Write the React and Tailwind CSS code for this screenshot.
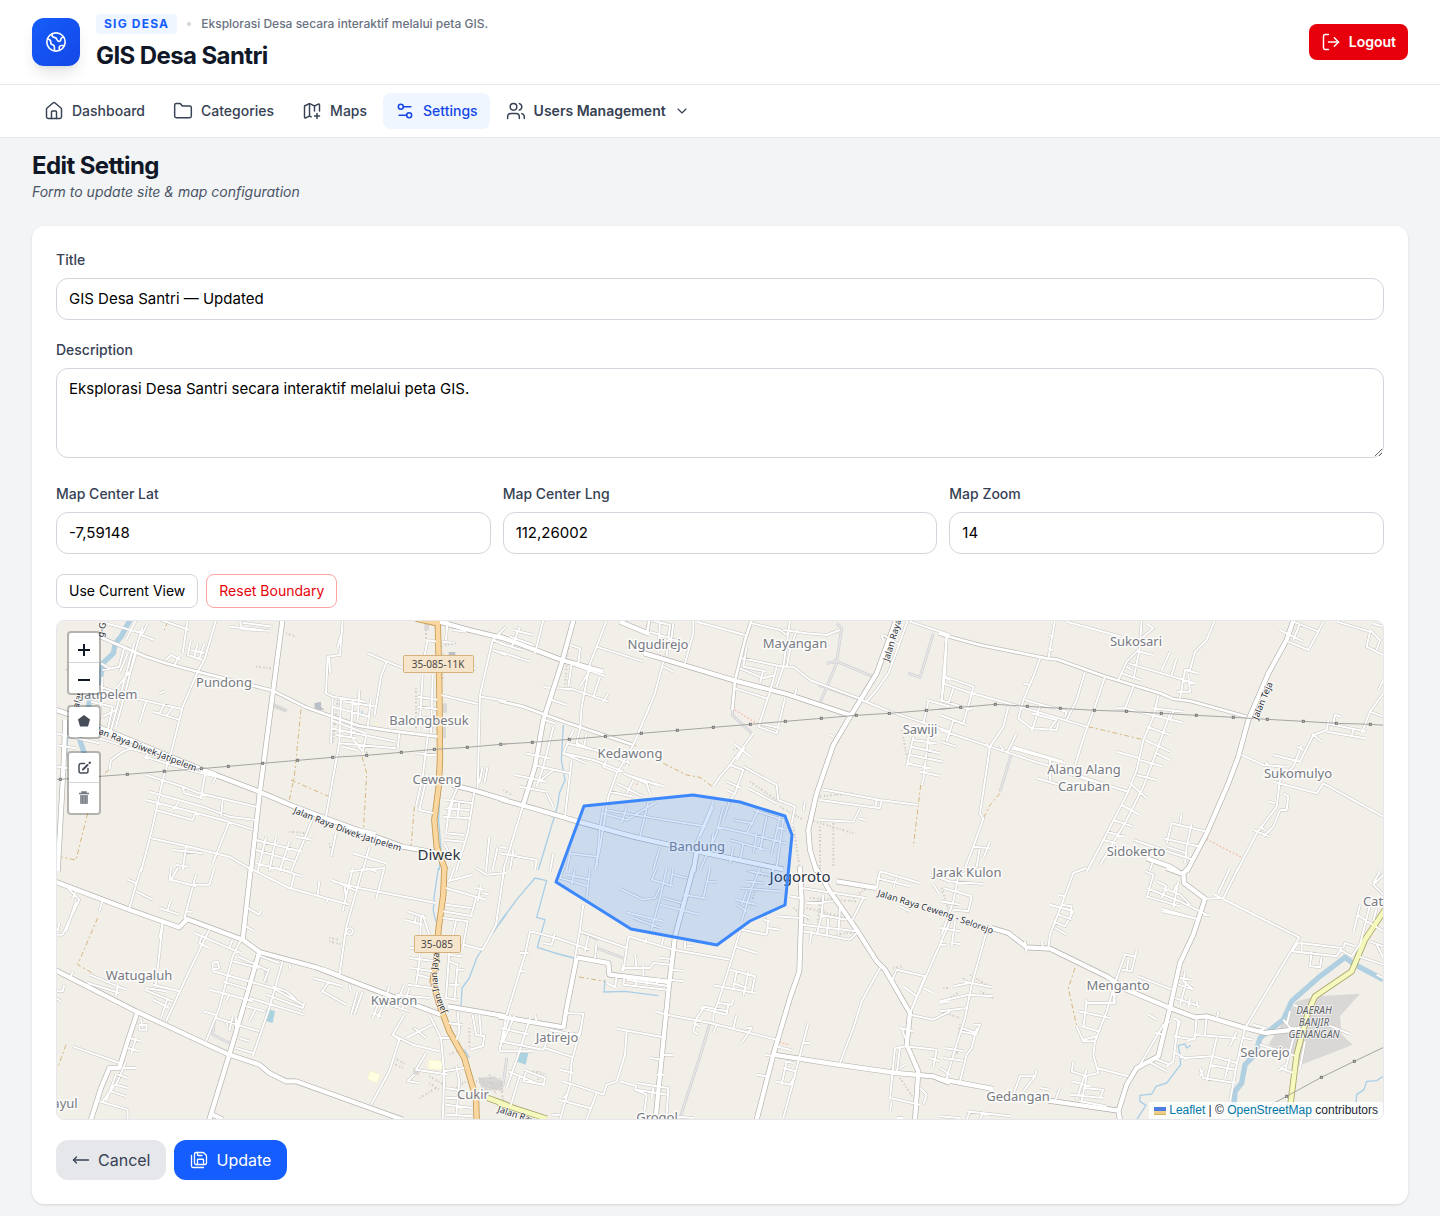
import React from "react";
import {
  House, Folder, MapPlus, Settings2, Users, ChevronDown, LogOut, MoveLeft, SaveAll,
} from "lucide-react";

/* Each sheet of the base map is drawn at three units per pixel from its own origin. */
const sheets = [
  {
    id: "north-west",
    at: "translate(56 620) scale(0.33333)",
    river: "M222 0 L195 50 L178 70 L172 100 L140 130 L133 180 L105 215 L98 260 L68 350 L85 400",
    stream: "M35 345 L32 410 M1152 500 L1148 600 L1155 690 L1150 750 M918 272 V290",
    trunk: "M1080 -4 L1145 10 M1145 -5 L1150 200 L1152 420 L1148 500 L1135 600 L1142 680 L1168 752",
    major:
      "M680 -5 L653 200 L612 512 L585 755 M-5 268 L60 290 L130 322 L440 450 L610 515 L720 562 L1040 680 L1140 698 M28 300 L22 450 L5 755 M1150 5 L1240 30 L1355 58 M1190 495 L1260 513 L1355 542",
    mid: "M130 50 L195 78 L270 110 L330 130 L425 155 L650 212 L750 262 L830 290 L910 318 L1000 332 L1145 350",
    minor:
      "M480 0 L445 120 L425 155 L380 260 L350 380 L320 480 L290 620 L255 755 M860 0 L852 105 L815 110 L810 220 L830 230 L930 245 M860 30 L845 80 M820 110 L822 160 M935 100 L992 125 L1045 145 M992 125 L975 170 L955 290 M1350 20 L1310 60 L1272 225 L1265 505 M1155 225 L1265 252 M1275 230 L1350 243 M1310 60 L1350 75 M1310 90 L1350 105 M1160 110 L1240 125 L1260 150 M100 190 L180 215 L250 238 L380 268 M270 245 L250 310 M310 220 L325 215 M325 250 L310 282 M350 262 L330 290 M290 275 L372 300 M195 78 L240 100 L225 150 L185 200 M140 150 L190 140 L205 80 M235 70 L200 200 L165 330 M215 100 L190 160 M260 20 L240 85 L215 190 L180 320 M240 0 L210 60 M255 45 L295 60 M135 130 L160 145 M150 10 L260 40 L275 10 M315 0 L400 30 M395 0 L380 100 M405 60 L395 105 L440 120 M425 70 L415 110 M445 70 L430 115 M405 90 L445 100 M330 120 L345 105 L375 120 M355 135 L370 108 M520 20 L620 30 M550 0 L560 28 L640 32 M560 8 L650 20 M140 170 L130 300 M180 270 L140 290 M105 245 L170 260 L155 330 M0 340 L130 370 M0 375 L60 385 M0 440 L40 445 M130 355 L240 390 L400 430 L480 460 M150 340 L250 372 M160 450 L165 420 L200 395 L240 380 M265 410 L400 450 L480 470 L470 490 M280 400 L265 415 M450 450 L435 530 M270 465 L380 500 L430 520 L600 560 M380 500 L385 520 L440 535 M500 540 L495 590 M280 515 L440 560 L520 590 L600 600 M270 540 L350 560 L500 600 L590 628 M370 545 L350 570 M300 570 L410 600 L420 575 M520 605 L470 730 M285 655 L400 680 L520 710 L580 745 M350 690 L440 700 M390 680 L380 750 M360 735 L400 740 M600 660 L740 695 M600 690 L720 725 M600 730 L700 755 M630 650 L605 755 M660 650 L640 755 M700 665 L670 755 M740 670 L705 755 M770 595 L740 670 M720 650 L770 660 M830 235 L825 370 M855 235 L850 370 L810 590 M890 240 L885 350 L920 395 M910 210 L905 300 M945 235 L935 320 M830 260 L940 290 M825 300 L930 340 M825 325 L1020 365 M840 345 L900 355 M850 370 L1020 385 M870 245 L960 260 M920 395 L930 350 M1030 340 L1025 385 M860 380 L900 390 M1100 165 L1090 330 M1130 165 L1125 340 M1085 230 L1150 240 M1085 260 L1145 268 M1085 290 L1145 298 M1115 350 L1100 470 L1080 560 M1115 460 L1090 570 L1135 580 M1080 400 L1140 405 M1110 60 L1145 65 M1115 60 L1105 110 M1160 65 L1190 68 M1175 0 L1170 60 M1190 30 L1230 35 M1280 440 L1270 490 M1295 440 L1285 490 M1205 500 L1180 560 L1170 640 M1255 515 L1235 640 L1200 755 M1170 540 L1250 550 M1165 565 L1240 570 M1160 590 L1240 595 M1170 640 L1225 645 M1165 660 L1225 665 M1190 545 L1180 590 M1210 545 L1205 590 M1165 670 L1180 700 M1300 650 L1290 755 M1325 680 L1310 750 M840 640 L825 710 M880 620 L960 640 M940 680 L920 755 M890 700 L990 730",
    track: "M735 268 L715 470 L700 540 M705 480 L820 530 M918 410 L932 460 L922 640 M1075 560 L1065 680 M95 580 L60 720 L0 708 M160 450 L140 462 M335 5 L325 30",
    buildings:
      "M1080 205 V330 M1070 310 L1140 325 M1145 80 L1200 70 M845 240 L830 370 M960 330 L1090 345 M900 370 L935 400 M1160 100 V180 M600 140 L650 145 M690 40 L720 50 M820 670 L830 710 M700 635 L760 640 M30 150 L40 145 M1110 30 V60",
    patches: "M655 250 L695 268 L690 278 L650 262 Z M1105 10 h14 v20 h-14 Z M1155 250 h18 v28 h-18 Z M1160 320 h10 v35 h-10 Z",
    civic: "M775 250 l20 -5 v16 l10 8 -28 2 Z M1178 96 h20 v16 h-20 Z",
    yellow: "M958 308 h6 v8 h-6 Z",
    line: [[-4, 478], [13, 478], [214, 463], [325, 454], [436, 446], [517, 439], [620, 430], [725, 421], [830, 412], [932, 406], [1036, 397], [1135, 388], [1234, 382], [1334, 373], [1352, 372]],
  },
  {
    id: "north",
    at: "translate(500 620) scale(0.33333)",
    stream: "M190 315 L184 420 L195 480 L178 520 L172 560 L115 750",
    major:
      "M222 -5 L185 130 L130 300 L105 440 L68 560 M-5 48 L185 120 L310 155 M0 537 L100 565 L235 605 L400 650 L620 700 L850 748 M590 695 L580 755 M360 5 L448 42 M432 100 L500 120 L705 182 L860 222 L1050 285 M1190 -5 L1130 160 L1075 250 L1050 290 L1000 375 L950 520 L925 630 L930 690 L950 755",
    mid: "M448 0 L440 45 M755 0 L735 60 L705 182 L697 270 M-2 243 L70 260 L200 308 L400 375",
    minor:
      "M130 0 L105 100 M30 50 L100 75 M60 20 L35 80 M0 70 L65 90 M0 95 L90 125 M40 30 L100 45 M320 0 L290 80 L270 130 L245 260 L240 330 M290 80 L430 125 M210 75 L240 85 L235 130 M185 120 L250 145 L315 168 M215 130 L205 200 M270 150 L240 200 M175 205 L220 208 L325 245 M300 170 L280 230 M325 220 L310 245 M130 200 L150 205 M155 240 L200 255 M135 300 L165 310 M490 125 L465 220 L400 375 M490 140 L520 155 M580 0 L580 40 L555 130 M450 0 L510 15 L500 110 M480 5 L475 100 M520 10 L510 90 M450 35 L540 65 M590 5 L735 45 M755 10 L840 30 L860 45 M870 0 L850 140 L830 200 M850 30 L920 40 L980 45 L1020 30 M890 30 L870 90 L860 140 M740 80 L730 140 L800 155 M725 115 L850 140 L880 140 L930 180 L1050 225 L1090 240 M720 145 L790 175 L825 165 M790 150 L780 190 M830 140 L810 215 M705 205 L800 235 M810 215 L775 320 L830 340 L855 235 M780 310 L840 325 M885 225 L890 205 M760 340 L690 435 L660 470 L640 500 M700 370 L755 412 M735 380 L710 420 M690 435 L730 450 L705 520 L690 540 M730 440 L830 495 L835 540 L885 560 L875 610 M745 505 L830 550 M680 485 L725 505 M680 510 L700 520 M1225 -5 L1195 80 L1165 160 L1130 210 L1100 245 M1150 45 L1200 75 M1150 60 L1145 45 M1230 5 L1350 45 M1340 50 L1330 170 L1325 245 M1085 240 L1170 275 L1260 305 L1350 335 M1285 245 L1270 310 M1280 240 L1350 260 M1240 350 L1220 440 M1285 350 L1270 480 L1265 495 M1240 360 L1310 370 M1235 380 L1320 400 M1230 405 L1330 425 M1220 430 L1290 445 M1260 455 L1320 468 M1330 170 L1350 180 M1255 555 L1140 540 L965 508 M960 540 L1140 565 L1145 540 M1080 565 L1060 605 L960 600 M1130 540 L1125 565 M1075 595 L1095 600 M915 545 L910 575 M990 345 L1000 350 M400 375 L350 460 L325 530 L300 680 L285 750 M220 330 L190 400 L280 420 L370 455 M240 325 L230 370 L390 430 M200 370 L370 410 M260 340 L250 390 M190 400 L260 430 M215 420 L195 590 M320 420 L310 440 L350 455 M160 320 L130 440 L110 500 M75 400 L150 415 M100 435 L210 460 M45 465 L140 485 M60 500 L140 515 M140 520 L160 560 M110 490 L160 450 M370 460 L440 490 L450 520 M350 490 L430 530 M380 465 L430 480 L470 495 M400 480 L380 520 M460 490 L495 500 M330 515 L400 530 M385 420 L380 440 M68 560 L10 750 M0 700 L110 720 L105 750 M40 690 L30 750 M160 700 L150 755 M0 680 L20 685",
    grey: "M1010 10 L1025 25 L1010 125 L980 130 M1000 120 L1120 170 M1010 130 L960 250 M705 182 L697 285 L755 340 M955 195 L1085 240 M1225 160 L1260 172 L1300 40",
    track: "M395 372 L415 380 M490 430 L560 465 L600 472 L640 502 M1262 495 L1240 680",
    dots: "M705 270 L770 310 M415 480 L408 500",
    buildings:
      "M1205 330 L1225 430 M840 560 L910 600 M750 485 L830 540 M930 600 L1060 640 M950 530 L1060 520 M960 620 V750 M1000 600 V740 M880 620 L900 750 M205 75 L195 200 M700 390 L720 380 M10 510 L35 525",
    line: [[-4, 373], [97, 367], [208, 358], [316, 349], [424, 340], [532, 331], [640, 322], [751, 313], [856, 304], [964, 295], [1069, 286], [1168, 280], [1279, 271], [1352, 265]],
    inner:
      "M310 560 L300 620 L290 740 M310 580 L380 600 L470 545 M380 560 L365 610 M445 545 L420 650 M315 570 L620 620 M640 545 L580 690 M640 560 L600 650 M670 560 L650 640 L600 750 M690 540 L670 600 M650 620 L740 640 L780 560 M740 640 L860 670 M760 570 L850 600 M800 590 L780 690 M840 590 L815 700 M700 600 L760 610 M770 640 L760 700 M690 660 L800 690 M830 620 L860 630 M850 600 L830 740 M700 680 L690 730 M730 670 L720 720 M210 700 L290 710 M210 700 L200 750 M480 680 L460 750 M640 640 L630 700",
  },
  {
    id: "north-east",
    at: "translate(940 620) scale(0.33333)",
    major: "M1062 -5 L1040 60 L985 160 L925 300 L895 410 L865 490 L800 640 L740 755 M620 715 L690 740 L715 755",
    mid: "M-5 40 L20 48 L120 75 L320 115 L350 118 L490 168 L660 220 L700 237 L750 243 L920 290",
    minor:
      "M345 0 L325 115 M325 45 L340 50 M325 85 L340 92 M20 48 L15 160 L5 240 M15 170 L100 200 L90 240 L70 310 M10 190 L80 215 L240 260 L440 320 M40 205 L25 250 M0 240 L90 268 M0 285 L80 315 M40 300 L20 365 M0 330 L150 380 L300 430 L370 450 M0 365 L50 380 M80 270 L100 265 M300 115 L280 170 L250 240 L235 295 L275 325 L350 330 L355 310 M250 190 L268 195 M255 240 L380 275 M300 255 L275 335 M275 280 L350 300 L330 325 M205 260 L190 320 L150 380 L120 580 L130 595 L100 680 L75 745 M220 380 L370 425 M230 340 L200 400 M215 385 L375 430 M140 370 L150 390 M180 375 L190 390 M435 155 L410 240 L380 300 M495 170 L465 260 L435 340 L405 435 M380 275 L375 290 M580 200 L555 265 L530 265 M555 265 L730 308 M380 5 L545 50 M605 -5 L600 80 L580 180 M600 85 L560 125 L535 180 M620 10 L640 25 L610 50 M565 130 L765 190 M600 95 L640 105 M545 160 L605 180 M560 140 L575 150 M690 95 L665 150 M710 115 L695 165 M825 0 L800 60 L765 95 L750 150 L735 150 L720 235 M735 150 L775 160 M745 165 L750 215 L710 215 M745 190 L765 190 M655 225 L640 290 L610 360 L590 450 L565 515 L490 660 L440 755 M640 265 L730 275 M700 275 L690 300 M690 280 L655 380 L610 500 L560 600 L480 735 M620 320 L690 345 M615 360 L690 395 M600 420 L670 440 M590 465 L650 480 M570 490 L620 535 M545 555 L600 585 M520 600 L580 620 M500 635 L555 650 M650 400 L690 420 M530 395 L600 415 M380 460 L565 515 M290 475 L360 495 M330 420 L330 480 M425 470 L560 515 M490 660 L530 670 M1020 30 L1090 65 M1060 5 L1135 35 L1105 90 L1045 65 M1060 60 L1080 10 M1150 5 L1135 35 M1190 5 L1290 35 L1280 80 L1330 105 M1290 30 L1320 60 L1310 90 M1295 10 L1330 20 M1330 180 L1315 210 M1330 220 L1290 275 L1265 340 M1290 275 L1330 290 M905 405 L970 435 L1040 440 M1000 405 L1080 425 M975 425 L990 440 M1080 425 L1120 345 L1160 330 L1165 300 M1070 380 L1090 390 M1115 340 L1145 365 M1160 310 L1280 335 M1160 335 L1275 355 M1180 310 L1185 285 L1205 290 M1240 330 L1235 345 M1085 375 L1060 440 L1020 480 L1010 560 L950 640 L890 755 M1000 485 L1130 520 L1150 490 L1330 590 M1030 520 L1045 530 L1040 570 L1020 570 L1000 620 L970 650 M985 545 L1005 550 M940 630 L990 650 M960 620 L975 630 M695 610 L800 635 M725 580 L720 610 M695 610 L680 670 M670 655 L780 680 M755 610 L740 680 L735 730 M580 660 L760 720 M680 680 L740 700 M640 720 L630 750 M100 680 L150 685 M150 665 L140 690 M120 680 L110 740 M140 690 L130 715",
    grey: "M215 400 L180 515",
    track: "M445 320 L605 358 M180 520 L150 555 L130 595",
    dots: "M800 658 L905 712",
    line: [[-4, 268], [62, 262], [166, 253], [262, 259], [361, 265], [463, 271], [559, 274], [664, 280], [769, 286], [880, 292], [982, 298], [1090, 304], [1189, 310], [1291, 313], [1335, 316]],
  },
  {
    id: "south-west",
    at: "translate(56 868) scale(0.33333)",
    stream: "M1147 0 L1134 90 L1132 130 L1140 160 M1350 140 L1310 195 L1262 270 L1240 330 L1218 360 L1215 420 M1225 545 L1240 570",
    trunk: "M1165 -5 L1162 80 L1148 180 L1140 280 L1130 340 L1150 410 L1180 490 L1225 570 L1245 640 L1260 690 L1262 755",
    secondary: "M1295 690 L1355 712",
    major:
      "M585 -5 L560 215 M-5 40 L220 125 L370 178 L392 155 M385 150 L560 215 L610 252 L780 298 L980 375 L1155 440 M-5 305 L240 430 L450 528 L520 560 L610 590 L640 615 L690 640 L720 640 L1040 755 M610 252 L570 390 L520 560 L460 755 M245 430 L215 520 L190 600 L160 600 L135 660 L105 755 M1175 415 L1350 445 M460 735 L500 755",
    minor:
      "M255 0 L220 120 M215 35 L240 45 M240 70 L290 95 M365 0 L345 35 L420 55 M345 0 L340 40 M475 0 L460 50 L415 50 M420 20 L385 150 M390 130 L410 132 M310 120 L370 140 M345 95 L335 125 M35 60 L70 95 L20 200 L0 200 M60 100 L30 190 M10 165 L5 190 M60 70 L50 90 M140 95 L130 130 M575 120 L610 140 L615 125 M570 175 L595 190 M590 5 L700 60 L880 110 M660 0 L740 25 M715 20 L705 60 M790 40 L785 80 M830 40 L910 60 L1140 105 M890 0 L860 130 M920 0 L870 180 L850 325 M810 105 L815 95 M865 50 L870 90 M880 10 L985 0 L960 95 M825 35 L905 70 M880 180 a10 10 0 1 0 1 0 M930 0 L960 10 M320 165 L300 350 M290 350 L370 370 M265 365 L350 400 M270 360 L330 370 M290 395 L340 420 M320 165 L310 210 M460 185 L390 330 L330 460 M415 195 L530 245 L555 255 M440 200 L430 225 L460 240 M335 390 L315 450 M530 215 L520 240 M555 215 L530 265 L490 420 L450 520 M470 285 L485 280 L490 300 L470 305 Z M470 310 L650 360 L740 410 M680 280 L640 420 L590 565 M600 260 L670 285 M545 265 L600 290 L640 310 M530 280 L610 300 M460 365 L590 400 M500 340 L580 365 M480 370 L520 380 L510 400 M580 390 L745 440 M630 380 L740 420 L745 405 M650 355 L690 370 L720 395 M640 300 L625 340 M440 430 L480 440 M480 450 L560 475 L610 490 M510 455 L515 475 M530 445 L520 490 M540 450 L540 490 M570 415 L625 430 M600 420 L580 460 M550 510 L580 520 M540 540 L590 555 M540 500 L530 530 M770 330 L860 355 M800 370 L870 410 M820 340 L795 375 M700 290 L705 305 M880 350 L885 370 M800 300 L850 320 M920 370 L895 440 M905 370 L885 440 M1000 355 L990 385 M970 400 L950 450 M985 405 L965 450 M950 435 L975 445 M1045 440 L1010 500 L1030 515 L1000 610 L945 710 M1010 500 L1070 530 L1150 550 M1120 440 L1155 510 L1165 620 L1160 755 M1050 510 L1130 470 M1075 480 L1110 510 M1110 555 L1080 605 L1180 620 M1075 620 L1055 640 L1090 645 M1165 610 L1225 600 M1150 510 L1180 510 M1170 465 L1220 470 M1205 430 L1210 490 L1200 520 M1250 440 L1260 500 L1285 505 L1280 535 L1240 545 M1270 440 L1275 500 M1350 450 L1330 550 M1170 660 L1230 670 M1170 690 L1240 690 M1170 710 L1250 720 M1170 740 L1250 745 M1200 590 L1210 640 L1200 750 M50 535 L190 585 M240 510 L225 560 M220 510 L255 520 M215 540 L250 550 M250 470 h22 v15 h-22 Z M255 455 L260 480 M210 580 L185 640 L140 700 M205 600 L240 600 M185 620 L215 630 M180 650 L215 660 M165 670 L210 685 M130 700 L215 725 L215 755 M180 620 L150 700 M185 350 L180 385 M100 320 L210 365 M95 345 L190 375 M50 310 L45 325 M0 370 L20 370 L25 350 M0 390 L15 400 M1045 155 L1100 170 M1080 145 L1075 170 M1055 130 L1110 150 M1095 145 L1090 280 L1080 350 M1100 140 L1120 200 M1060 240 L1090 240 M1060 270 L1140 280 M1065 300 L1130 310 M1055 350 L1130 360 M1045 350 L1020 410 M1060 360 L1040 420 M1020 380 L1120 390 M1080 350 L1085 320 L1120 330 M1000 410 L1060 430 M1175 40 L1250 20 M1195 0 L1180 40 M1170 60 L1290 95 M1275 50 L1265 100 M1260 60 L1285 65 M1170 110 L1245 120 M1160 130 L1250 145 M1260 90 L1245 145 M1160 150 L1235 160 L1220 240 M1200 160 L1180 250 L1170 390 M1225 230 L1280 245 L1320 170 L1345 0 M1180 280 L1205 290 L1195 400 M1200 305 L1225 305 M1175 260 L1220 265 M1180 350 L1210 350 M1170 390 L1205 395 M1260 0 L1290 20 L1350 15 M1280 75 L1300 80",
    grey: "M630 310 V345 M475 460 L470 500 L520 525 M800 300 L840 315",
    track: "M125 150 L65 290 L115 318 M30 530 L5 600",
    buildings:
      "M820 220 L860 230 M820 210 L850 215 M1015 570 L1050 590 M1010 585 L1040 600 M1070 480 L1100 500 M1240 480 V540 M1120 625 L1165 650 M1120 645 L1150 665 M1260 640 L1340 650 M1270 630 L1330 660 M1280 650 L1345 670 M1300 620 L1320 680 M1180 560 L1230 540 M1200 660 L1230 640 M1090 690 L1140 660",
    patches: "M1265 630 l50 -5 30 20 -5 20 -60 5 Z M1072 600 h18 v20 h-18 Z",
    water: "M632 422 L657 430 L650 465 L625 458 Z",
    yellow: "M942 608 L972 620 L963 645 L935 634 Z M1118 575 L1160 580 L1165 605 L1117 602 Z",
  },
  {
    id: "south",
    at: "translate(500 868) scale(0.33333)",
    stream: "M-2 165 L50 95 L105 30 L140 38 L110 148 L135 155 L112 238 L175 258 L222 270 M315 335 L312 372 L375 370 L475 383",
    secondary: "M-5 705 L140 752",
    major:
      "M900 -5 L905 100 L898 310 L870 390 L820 560 L770 755 M580 0 L525 205 L505 370 L485 570 L468 740 M945 -5 L990 70 L1070 185 L1130 280 L1155 305 L1230 435 L1220 530 L1255 610 L1245 755 M1010 40 L1130 60 M820 560 L1000 588 L1190 615 L1300 625 L1350 645 M230 270 L200 420 L190 480 M230 268 L325 285 L328 320 L510 342 M-5 445 L190 478",
    minor:
      "M250 110 L240 185 L225 270 M90 190 L75 260 L20 440 M90 190 L170 210 L270 245 M130 225 L155 230 L165 195 M60 255 L85 255 M55 310 L75 310 M240 190 L380 240 L370 310 M290 225 L285 270 M265 205 L255 250 M385 205 L380 240 M385 205 L520 245 L690 275 M440 210 L435 225 M490 210 L485 230 M555 220 L555 240 M560 235 L580 235 M480 270 L510 272 M365 300 L450 300 L460 285 L510 290 M405 260 L410 300 M370 290 L365 310 M430 290 L430 325 M350 325 L345 360 M375 320 L370 350 L500 365 M320 345 L350 360 M380 335 L510 355 M410 340 L405 355 M440 330 L440 350 M475 330 L470 350 M510 305 L550 308 M510 335 L550 340 M720 190 L690 290 L655 400 L640 440 M705 235 L770 255 M725 185 L800 200 L805 155 M790 155 L810 160 M805 180 L840 185 M690 305 L765 325 L755 375 M710 310 L700 360 M640 352 L765 375 M700 345 L740 360 M745 310 L730 385 M655 405 L695 410 L700 395 M600 420 L680 440 M615 415 L590 450 L580 490 L595 500 M640 440 L640 460 M605 415 L680 430 M685 410 L680 440 M465 430 L500 440 L630 465 L830 515 M710 440 L700 480 M650 470 L640 495 M580 465 L600 475 M740 480 L755 480 L725 525 M925 465 L900 560 L880 640 L850 750 M910 525 L930 525 M830 535 L880 548 M795 560 L820 565 M770 620 L800 625 M855 580 L880 585 M850 600 L885 610 M825 640 L870 650 L885 625 M860 580 L845 650 M1140 300 L1085 400 L1060 480 L1020 585 M1350 160 L1230 435 M1190 305 L1275 325 L1240 410 M1190 305 L1175 340 M1210 355 L1250 385 M1320 230 L1340 230 M1270 360 L1300 375 M1230 440 L1300 455 L1350 430 M1320 405 L1350 400 M1200 480 L1240 490 M1205 480 L1215 510 M1215 535 L1310 545 L1300 600 M1185 540 L1170 690 M1200 540 L1190 620 M1185 540 L1220 535 M1170 690 L1260 710 M1175 700 L1170 730 M1260 660 L1280 680 L1270 710 M1200 600 L1215 590 M1290 570 L1320 580 M1190 750 L1210 750 M905 60 L1100 90 M905 140 L930 150 M905 170 L1070 190 M910 190 L1050 215 L1075 190 M935 190 L930 225 M830 145 L900 150 M870 85 L900 90 M970 80 L965 140 L950 200 M920 105 L1000 100 M1090 90 L1055 160 M960 140 L1040 155 M1020 120 L1015 200 M985 150 L980 210 M1140 10 L1260 45 M1130 30 L1230 55 M1140 10 L1130 60 M1190 30 L1180 60 M1200 115 L1230 130 M1290 20 L1350 40 M1300 50 L1320 80 M1330 100 L1350 105 M350 482 L490 508 M380 485 L375 560 L350 640 M350 640 L320 650 L310 680 L220 650 L185 640 M290 675 L260 755 M245 470 L215 580 L210 640 M195 435 L250 437 L240 500 L205 495 M135 540 L220 568 M150 485 L240 505 M0 480 L90 500 M0 520 L130 545 L150 500 M0 550 L100 550 M90 450 L55 560 L20 660 M45 440 L10 520 M30 440 L0 540 M105 440 L110 460 M70 605 L135 630 L130 655 M80 605 L70 640 L135 650 M25 610 L120 650 M60 620 L30 720 M180 605 L220 615 M210 650 L180 755 M175 695 L270 720 M190 690 L200 680 M155 740 L180 740 M410 645 L505 660 L500 740 M410 650 L405 665 L440 680 L430 755 M410 665 L500 680 M460 660 L455 690 M360 640 L410 655 M485 560 L520 562 M450 570 L485 575 M470 620 L495 620 M520 745 L580 750",
    grey: "M630 465 L600 565 L540 750 M250 195 L295 215 M290 240 L370 270 M20 570 L10 650",
    track: "M237 327 L315 340",
    dots: "M838 522 L865 530",
    buildings:
      "M930 90 L1070 100 M920 120 L1040 150 M960 100 L950 200 M1010 200 L1080 190 M1060 90 L1100 60 M880 120 L930 160 M1180 300 L1210 295 M1330 360 L1350 360 M1200 630 L1240 690 M0 630 L10 700 M100 610 L140 620 M115 610 V640 M800 150 L790 160 M740 10 L860 40 M770 50 L750 120",
    water: "M52 552 L85 556 L77 590 L47 580 Z",
    inner:
      "M190 0 L180 30 M225 0 L215 50 M180 30 L265 55 M270 0 L260 90 M200 20 L270 35 M470 0 L455 35 L520 55 M500 0 L480 90 L450 200 M520 0 L510 60 M520 20 L560 30 M360 62 L430 95 L465 90 L480 60 M490 90 L545 105 M480 110 L600 140 M380 133 L490 160 M400 150 L480 180 M630 0 L610 90 M620 40 L650 42 M550 80 L620 92 M780 0 L755 60 L725 160 M720 60 L840 70 M735 40 L790 45 M705 95 L770 110 M710 110 L740 130 M740 70 L725 110 M820 0 L810 60 M750 10 L860 30",
  },
  {
    id: "south-east",
    at: "translate(940 868) scale(0.33333)",
    river: "M1330 335 L1245 290 L1215 268 L1140 325 L1055 400 L1030 455 L960 510 L945 560 L915 590 L905 645 L885 670 L882 715",
    stream: "M752 532 L740 540 L735 528 L715 532 L718 550 L722 590 L680 645 L648 655 L635 678 L600 682 L600 700 L618 712 L590 755 M1330 625 L1310 638 L1280 640 L1272 665 L1250 680 L1248 705",
    secondary: "M1335 125 L1275 215 L1235 310 L1125 385 L1105 430 L1070 560 L1050 720",
    major:
      "M155 180 L205 195 L260 238 L330 242 L500 325 L560 365 L690 420 L765 448 L800 445 L910 478 L975 495 L1080 483 M680 0 L728 18 L745 0 M730 15 L732 45 L795 92 L760 200 L720 285 L690 420 L655 565 L590 600 L560 650 L535 730 M-5 632 L160 663 M325 698 L535 728 M535 728 L540 755",
    minor:
      "M60 0 L40 100 L5 200 M20 40 L130 48 M10 60 L95 85 L85 130 L40 125 M0 100 L60 110 M45 160 L35 235 M0 180 L60 190 M35 225 L60 228 M0 220 L10 222 M130 0 L60 20 M140 190 L95 350 L75 450 L40 560 L20 630 M0 400 L85 380 L160 385 M70 340 L155 358 M0 430 L80 420 M40 355 L90 345 M65 480 L110 495 L120 470 L100 470 M110 480 L95 540 L80 560 L60 640 M60 490 L110 500 M15 540 L70 550 M10 570 L70 578 M0 600 L30 620 M400 15 L365 110 L330 200 L325 240 M440 0 L400 15 M330 110 L400 130 M355 80 L375 85 M400 130 L375 175 L340 160 M355 140 L395 155 M345 180 L380 200 M365 110 L395 115 L390 150 M255 220 L260 255 M305 220 L310 240 M590 245 L575 310 L545 305 M550 258 L590 268 M555 260 L530 330 L500 430 L465 520 L460 560 M565 275 L560 310 M595 325 L695 365 M520 370 L525 405 L440 405 L435 395 M525 380 L520 405 M415 430 L510 450 M440 400 L430 480 M410 475 L430 520 L465 520 M425 475 L475 490 M430 515 L470 505 M460 560 L475 615 L435 625 M470 600 L565 625 M400 580 L395 610 L440 625 L425 700 M440 605 L410 695 M395 640 L450 655 M430 660 L490 665 L480 690 M390 680 L490 690 M420 700 L500 715 M360 660 L345 700 M290 605 L285 625 L240 625 L220 680 M285 625 L250 670 M300 660 L330 665 M80 730 L210 745 M90 730 L80 755 M130 730 L120 755 M0 745 L60 750 M615 10 L640 20 L620 90 M650 40 L680 55 L665 90 M620 60 L720 100 L800 140 M670 60 L720 80 L750 110 M620 85 L720 115 M715 40 L700 120 M665 122 L780 155 M665 130 L760 150 M790 140 L810 142 M700 75 L710 50 M895 0 L850 90 L795 92 M870 0 L835 75 M820 78 L1078 208 L915 480 M1075 225 L1055 250 L1190 265 L1205 240 L1080 225 M1115 250 L1110 295 L1140 298 L1145 265 M1085 225 L1085 250 M1200 245 L1235 265 L1260 230 L1290 110 M1210 240 L1215 225 L1245 235 M1330 20 L1300 50 L1330 80 M1320 10 L1300 45 M1250 140 L1330 190 M1260 110 L1240 195 M1310 120 L1300 160 M1290 220 L1330 235 M1255 265 L1330 290 M1310 230 L1330 270 M1310 320 L1330 330 M735 310 L730 340 L760 365 M720 330 L755 335 M715 350 L760 365 M740 340 L720 410 M705 390 L780 415 M750 390 L745 420 M770 400 L775 420 M835 430 L830 455 M800 445 L795 500 M770 445 L765 510 L740 520 M700 450 L720 460 L705 510 M690 460 L670 470 L600 590 M715 460 L700 580 L680 595 M760 500 L890 510 M700 505 L765 515 M830 510 L800 640 M890 490 L870 535 M780 600 L790 630 L885 645 M820 565 L890 585 M810 590 L885 605 M870 570 L855 630 M790 605 L780 625 M645 495 L670 500 M625 440 L650 455 M625 580 L680 610 M640 570 L690 590 M735 570 L815 565 M700 550 L740 575 M725 560 L720 570 M915 480 L890 590 L870 700 M910 510 L940 515 M940 470 L975 480 L955 490 M1030 455 L1050 480 L1095 485 M1060 410 L1080 420 M1050 430 L1040 470 M1160 470 L1230 498 M960 530 L1070 565 M1060 510 L1035 610 M1095 520 L1080 600 M1020 600 L1060 615 M1015 610 L1035 590",
    track: "M405 300 L385 360 L410 475",
    buildings: "M15 400 L60 370 M90 320 L155 360 M70 330 L75 345 M0 430 L60 450 M120 370 L160 390 M60 470 L50 560 M5 60 L30 140",
    patches: "M1130 385 L1260 377 L1200 445 L1205 500 L1238 530 L1090 588 L1050 560 L985 530 L1070 400 Z",
    line: [[860, 780], [1040, 685], [1144, 628], [1243, 580], [1335, 536]],
  },
];

const casings = [
  ["minor", "#c6c4c1", 9],
  ["mid", "#bebcb9", 12],
  ["major", "#b3b1ae", 17],
  ["secondary", "#a8a56a", 19],
  ["trunk", "#c09a52", 19],
];
const fills = [
  ["minor", "#ffffff", 6],
  ["mid", "#ffffff", 8],
  ["major", "#ffffff", 13],
  ["secondary", "#f6f9be", 14],
  ["trunk", "#fad6a0", 14],
];

function Layer({ name, stroke, width, dash, fill = "none" }) {
  return (
    <g stroke={stroke} strokeWidth={width} strokeDasharray={dash} fill={fill} strokeLinejoin="round">
      {sheets.filter((s) => s[name]).map((s) => (
        <path key={s.id} transform={s.at} d={s[name]} />
      ))}
    </g>
  );
}

const places = [
  [658, 649, "Ngudirejo"], [795, 648, "Mayangan"], [1136, 646, "Sukosari"], [224, 687, "Pundong"],
  [109, 699, "Jatipelem"], [429, 725, "Balongbesuk"], [630, 758, "Kedawong"], [920, 734, "Sawiji"],
  [437, 784, "Ceweng"], [1084, 774, "Alang Alang"], [1084, 791, "Caruban"], [1298, 778, "Sukomulyo"],
  [1136, 856, "Sidokerto"], [697, 851, "Bandung"], [967, 877, "Jarak Kulon"], [1373, 906, "Cat"],
  [139, 980, "Watugaluh"], [394, 1005, "Kwaron"], [1118, 990, "Menganto"], [557, 1042, "Jatirejo"],
  [1265, 1057, "Selorejo"], [473, 1099, "Cukir"], [1018, 1101, "Gedangan"], [657, 1122, "Grogol"], [65, 1108, "ayul"],
];

const streets = [
  ["jati-1", "M97 730 L200 770 L260 795", "lan Raya Diwek-Jatipelem"],
  ["jati-2", "M294 810 L355 834 L410 851", "Jalan Raya Diwek-Jatipelem"],
  ["selorejo", "M878 893 L940 912 L1010 937", "Jalan Raya Ceweng - Selorejo"],
  ["teja", "M1255 719 L1278 663", "Jalan Teja"],
  ["raya", "M886 661 L900 614 L908 590", "Jalan Raya"],
  ["irian", "M444 1013 Q430 985 436 955 L440 900", "Jalan Irian Jaya"],
  ["cukir", "M498 1109 L560 1129", "Jalan Raya"],
  ["west", "M75 710 L86 670", "Jalan"],
  ["gate", "M100 637 L106 610", "g-G"],
];

function BaseMap() {
  return (
    <svg
      className="absolute inset-0 h-full w-full"
      viewBox="57 621 1326 498"
      preserveAspectRatio="xMidYMid slice"
      role="img"
      aria-label="Map of Diwek and Jogoroto"
      fontFamily='"Noto Sans", sans-serif'
    >
      <rect x="0" y="600" width="1440" height="540" fill="#f2efe9" />
      <Layer name="patches" fill="#dad8d6" />
      <Layer name="civic" fill="#b9bfc6" />
      <Layer name="yellow" fill="#fffee0" stroke="#eeeeb0" width="1" />
      <Layer name="water" fill="#aad3df" />
      <Layer name="buildings" stroke="#cfcbc7" width="6" dash="3 6 5 8 4 5" />
      <Layer name="stream" stroke="#a9cfe6" width="4" />
      <Layer name="river" stroke="#b0d0e2" width="16" />
      <Layer name="track" stroke="#d5b67c" width="3" dash="15 8 6 8" />
      <Layer name="dots" stroke="#f8b9a8" width="4" dash="5 6" />
      <Layer name="grey" stroke="#c9c8cb" width="8" />
      <Layer name="grey" stroke="#e6e5e8" width="5" />
      <Layer name="inner" stroke="#cdcbc8" width="9" />
      {casings.map(([name, stroke, width]) => (
        <Layer key={name} name={name} stroke={stroke} width={width} />
      ))}
      <Layer name="inner" stroke="#ffffff" width="5" />
      {fills.map(([name, stroke, width]) => (
        <Layer key={name} name={name} stroke={stroke} width={width} />
      ))}
      {sheets.filter((s) => s.line).map((s) => (
        <g key={s.id} transform={s.at}>
          <polyline points={s.line.map((p) => p.join(",")).join(" ")} fill="none" stroke="#a5a5a3" strokeWidth="3" />
          {s.line.slice(1, -1).map(([x, y]) => (
            <rect key={x} x={x - 3} y={y - 3} width="6" height="6" fill="#d4d2ce" stroke="#777777" strokeWidth="3" />
          ))}
        </g>
      ))}
      <g fill="#2c3038" fontSize="9" stroke="#ffffff" strokeWidth="2" paintOrder="stroke" strokeLinejoin="round">
        {streets.map(([id, d, label]) => (
          <g key={id}>
            <path id={id} d={d} fill="none" stroke="none" />
            <text dy="3" strokeOpacity="0.6">
              <textPath href={"#" + id}>{label}</textPath>
            </text>
          </g>
        ))}
      </g>
      <g fill="#777a80" fontSize="13" textAnchor="middle" stroke="#ffffff" strokeOpacity="0.8" strokeWidth="3" paintOrder="stroke" strokeLinejoin="round">
        {places.map(([x, y, label]) => (
          <text key={label} x={x} y={y}>{label}</text>
        ))}
      </g>
      <g fill="#2d3440" fontSize="15" textAnchor="middle" stroke="#ffffff" strokeOpacity="0.7" strokeWidth="3" paintOrder="stroke">
        <text x="439" y="860">Diwek</text>
        <text x="800" y="882">Jogoroto</text>
      </g>
      <g fill="#60636a" fontSize="10" fontStyle="italic" textAnchor="middle" stroke="#ffffff" strokeOpacity="0.6" strokeWidth="2" paintOrder="stroke">
        <text x="1314" y="1014">DAERAH</text>
        <text x="1314" y="1026">BANJIR</text>
        <text x="1314" y="1038">GENANGAN</text>
      </g>
      <g fill="#f6e4cb" stroke="#d5b27b">
        <rect x="403.500" y="655.500" width="70" height="17" rx="1" />
        <rect x="414.500" y="935.500" width="46" height="17" rx="1" />
      </g>
      <g fill="#4a4a4a" fontSize="10" textAnchor="middle">
        <text x="438" y="668">35-085-11K</text>
        <text x="437" y="948">35-085</text>
      </g>
      <path
        d="M584 806 L693 795 L740 802 L785 816 L792 835 L785 905 L750 921 L717 945 L631 929 L556 882 Z"
        fill="#3388ff" fillOpacity="0.2" stroke="#3b87fb" strokeWidth="3" strokeLinejoin="round"
      />
    </svg>
  );
}

const toolGroup = "flex flex-col overflow-hidden rounded border-2 border-black/25 bg-white bg-clip-padding";
const toolButton = "flex h-[30px] w-[30px] items-center justify-center";

function MapTools() {
  return (
    <div className="absolute top-2.5 left-2.5 flex flex-col gap-2.5">
      <div className={toolGroup}>
        <button type="button" aria-label="Zoom in" className={toolButton + " border-b border-gray-300"}>
          <svg className="mt-1" width="14" height="14" stroke="#111827" strokeWidth="2"><path d="M1 7H13M7 1V13" /></svg>
        </button>
        <button type="button" aria-label="Zoom out" className={toolButton}>
          <svg className="mt-1" width="14" height="14" stroke="#111827" strokeWidth="2"><path d="M1 7H13" /></svg>
        </button>
      </div>
      <div className={toolGroup}>
        <button type="button" aria-label="Draw a polygon" className={toolButton}>
          <svg width="14" height="14" fill="#464d58"><path d="M7 0 L13 4.500 L11 11.500 H3 L1 4.500 Z" /></svg>
        </button>
      </div>
      <div className={toolGroup + " mt-0.5"}>
        <button type="button" aria-label="Edit layers" className={toolButton + " border-b border-gray-300"}>
          <svg width="14" height="14" fill="none" stroke="#464d58" strokeWidth="1.500" strokeLinecap="round">
            <path d="M7.500 2.500H4A2 2 0 0 0 2 4.500V10A2 2 0 0 0 4 12H9A2 2 0 0 0 11 10V7.500" />
            <path d="M6 8.500 L10.500 4 M12.500 2 L13 1.500" strokeWidth="2" />
          </svg>
        </button>
        <button type="button" aria-label="Delete layers" className={toolButton}>
          <svg width="12" height="14" fill="#92959b">
            <path d="M2 4H10V12A1 1 0 0 1 9 13H3A1 1 0 0 1 2 12Z" />
            <path d="M1 2.500H11M4 2.500V1H8V2.500" fill="none" stroke="#777b82" strokeWidth="1.500" />
            <path d="M4.500 5V12M7.500 5V12" stroke="#7d8087" />
          </svg>
        </button>
      </div>
    </div>
  );
}

function GlobeMark() {
  return (
    <svg width="22" height="22" viewBox="0 0 24 24" fill="none" stroke="currentColor" strokeWidth="1.750" strokeLinecap="round" strokeLinejoin="round" aria-hidden="true">
      <circle cx="12" cy="12" r="10" />
      <path d="M7.500 3.200 Q7.500 6.500 10 7 Q12.500 7.300 13 9.300 Q13.800 11.800 16 11.300 Q17.500 10.600 17.300 8.800 Q17.600 7 20.500 6.800" />
      <path d="M2.700 8.500 Q6.500 9.500 6.300 12.300 Q6 14.500 8.500 15 Q10.500 15.700 10.300 18 V21.500" />
      <path d="M15.500 21.200 V18 Q15.800 15.800 18 15.800 H21" />
    </svg>
  );
}

const navItems = [
  { label: "Dashboard", Icon: House },
  { label: "Categories", Icon: Folder },
  { label: "Maps", Icon: MapPlus },
  { label: "Settings", Icon: Settings2, active: true },
];

const fieldClass = "block w-full rounded-xl border border-gray-300 bg-white px-3 py-2 text-[15px] leading-6 text-black";
const labelClass = "mb-2 block text-sm font-medium text-gray-700";

function Field({ id, label, value }) {
  return (
    <div className="min-w-0">
      <label htmlFor={id} className={labelClass}>{label}</label>
      <input id={id} type="text" defaultValue={value} className={fieldClass} />
    </div>
  );
}

export default function App() {
  return (
    <div className="min-h-screen bg-gray-100 pb-3 font-['Inter',sans-serif] text-gray-900">
      <header className="flex items-center justify-between border-b border-gray-200 bg-white px-8 py-3">
        <div className="flex items-center gap-4">
          <div className="flex h-12 w-12 items-center justify-center rounded-xl bg-linear-to-br from-blue-600 to-blue-700 text-white shadow-lg shadow-black/10">
            <GlobeMark />
          </div>
          <div>
            <div className="flex h-6 items-center gap-2">
              <span className="rounded bg-blue-50 px-2 py-0.5 text-xs font-bold tracking-widest text-blue-600">SIG DESA</span>
              <span className="mx-0.5 h-1 w-1 rounded-full bg-gray-300" />
              <span className="text-xs font-medium text-gray-500">Eksplorasi Desa secara interaktif melalui peta GIS.</span>
            </div>
            <p className="mt-1 text-2xl font-bold tracking-tight">GIS Desa Santri</p>
          </div>
        </div>
        <button type="button" className="flex h-9 items-center gap-2 rounded-lg bg-[#e7000b] px-3 text-sm font-semibold text-white">
          <LogOut size={20} strokeWidth={1.75} />
          Logout
        </button>
      </header>

      <nav className="flex gap-1 border-b border-gray-200 bg-white px-8 py-2">
        {navItems.map(({ label, Icon, active }) => (
          <a
            key={label}
            href="#"
            className={
              "flex h-9 items-center gap-2 rounded-lg px-3 text-sm font-medium " +
              (active ? "bg-blue-50 text-blue-700" : "text-gray-700")
            }
          >
            <Icon size={20} strokeWidth={1.75} />
            {label}
          </a>
        ))}
        <button type="button" className="flex h-9 items-center gap-2 rounded-lg px-3 text-sm font-semibold text-gray-700">
          <Users size={20} strokeWidth={1.75} />
          Users Management
          <ChevronDown size={16} strokeWidth={1.75} />
        </button>
      </nav>

      <main className="px-8 pt-3">
        <h1 className="text-2xl font-bold tracking-tight">Edit Setting</h1>
        <p className="text-sm text-gray-600 italic">Form to update site &amp; map configuration</p>

        <form className="mt-6 flex flex-col gap-5 rounded-xl bg-white p-6 shadow-sm" onSubmit={(e) => e.preventDefault()}>
          <Field id="title" label="Title" value="GIS Desa Santri — Updated" />
          <div className="mb-1.5">
            <label htmlFor="description" className={labelClass}>Description</label>
            <textarea
              id="description"
              rows={3}
              defaultValue="Eksplorasi Desa Santri secara interaktif melalui peta GIS."
              className={fieldClass + " resize-y"}
            />
          </div>
          <div className="grid grid-cols-3 gap-3">
            <Field id="lat" label="Map Center Lat" value="-7,59148" />
            <Field id="lng" label="Map Center Lng" value="112,26002" />
            <Field id="zoom" label="Map Zoom" value="14" />
          </div>
          <div>
            <div className="mb-3 flex gap-2">
              <button type="button" className="rounded-lg border border-gray-300 px-3 py-1.5 text-sm text-black">Use Current View</button>
              <button type="button" className="rounded-lg border border-red-300 px-3 py-1.5 text-sm text-red-600">Reset Boundary</button>
            </div>
            <div className="relative h-[500px] overflow-hidden rounded-lg border border-gray-200">
              <BaseMap />
              <MapTools />
              <div className="absolute right-0 bottom-0 flex items-center bg-white/80 px-[5px] font-['Liberation_Sans',sans-serif] text-xs leading-[17px] whitespace-pre text-gray-800">
                <svg className="mr-[3px]" width="12" height="8" viewBox="0 0 12 8" aria-hidden="true">
                  <path fill="#4c7be1" d="M0 0h12v4H0z" />
                  <path fill="#f0cd85" d="M0 4h12v3H0z" />
                  <path fill="#d9b264" d="M0 7h12v1H0z" />
                </svg>
                <a href="#" className="text-[#0078a8]">Leaflet</a>
                <span> | © </span>
                <a href="#" className="text-[#0078a8]">OpenStreetMap</a>
                <span> contributors</span>
              </div>
            </div>
          </div>
          <div className="flex gap-2">
            <a href="#" className="flex h-10 items-center gap-2 rounded-xl bg-gray-200 px-4 text-gray-700">
              <MoveLeft size={18} strokeWidth={1.75} />
              Cancel
            </a>
            <button type="submit" className="flex h-10 items-center gap-2 rounded-xl bg-[#155dfc] px-4 text-white">
              <SaveAll size={18} strokeWidth={1.75} />
              Update
            </button>
          </div>
        </form>
      </main>
    </div>
  );
}
